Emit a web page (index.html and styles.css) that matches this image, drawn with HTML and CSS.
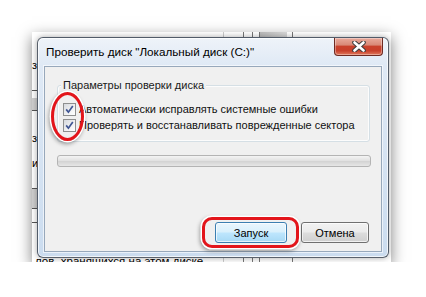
FILE: index.html
```html
<!DOCTYPE html>
<html lang="ru">
<head>
    <meta charset="UTF-8">
    <meta name="viewport" content="width=device-width, initial-scale=1.0">
    <title>Проверить диск</title>
    <link rel="stylesheet" href="styles.css">
</head>
<body>
    <div class="shot">
        <!-- bits of the window that sits behind the dialog -->
        <div class="behind">
            <span class="bg-letter l1">з</span>
            <span class="bg-letter l2">з</span>
            <span class="bg-letter l3">и</span>
            <span class="bg-block b1"></span>
            <span class="bg-block b2"></span>
            <span class="bg-rule r1"></span>
            <span class="bg-rule r2"></span>
            <span class="bg-rule r3"></span>
            <span class="bg-rule r4"></span>
            <span class="bg-rule r5"></span>
            <span class="bg-col c1"></span>
            <span class="bg-col c2"></span>
            <span class="bg-col c3"></span>
            <span class="bg-col c4"></span>
            <span class="bg-col c5"></span>
            <span class="bg-head"></span>
            <span class="bg-text">лов, хранящихся на этом диске.</span>
        </div>

        <div class="window">
            <div class="titlebar">
                <span class="title">Проверить диск "Локальный диск (С:)"</span>
                <span class="close">
                    <svg width="14" height="11" viewBox="0 0 14 11">
                        <path d="M2.5 1.5 L11.5 9.5 M11.5 1.5 L2.5 9.5" stroke="#3d3d3d" stroke-width="4.6" stroke-linecap="round"/>
                        <path d="M2.5 1.5 L11.5 9.5 M11.5 1.5 L2.5 9.5" stroke="#fff" stroke-width="2.6" stroke-linecap="round"/>
                    </svg>
                </span>
            </div>

            <div class="client">
                <div class="group">
                    <span class="group-title">Параметры проверки диска</span>
                    <div class="options">
                        <span class="mark-ellipse"></span>
                        <div class="option">
                            <span class="check">
                                <svg width="11" height="11" viewBox="0 0 11 11">
                                    <path d="M2.2 5.4 L4.4 8.2 L8.8 2" fill="none" stroke="#3f5593" stroke-width="1.7"/>
                                </svg>
                            </span>
                            Автоматически исправлять системные ошибки
                        </div>
                        <div class="option">
                            <span class="check">
                                <svg width="11" height="11" viewBox="0 0 11 11">
                                    <path d="M2.2 5.4 L4.4 8.2 L8.8 2" fill="none" stroke="#3f5593" stroke-width="1.7"/>
                                </svg>
                            </span>
                            Проверять и восстанавливать поврежденные сектора
                        </div>
                    </div>
                </div>

                <div class="progress"></div>

                <div class="actions">
                    <span class="btn btn-default">Запуск</span>
                    <span class="btn btn-cancel">Отмена</span>
                </div>
            </div>
        </div>
    </div>
</body>
</html>
```

FILE: styles.css
```css
body {
    margin: 0;
    background-color: #fff;
    font-family: 'Liberation Sans', Arial, sans-serif;
    font-size: 11px;
    color: #111;
}

.shot {
    display: grid;
    width: 359px;
    height: 230px;
    margin: 32px 0 0 32px;
    overflow: hidden;
    background-color: #fff;
    box-shadow: 0 5px 14px rgba(0, 0, 0, 0.5);
}

.behind,
.window {
    grid-area: 1 / 1;
}

/* the background window is a free canvas of fragments */
.behind {
    position: relative;
}

.bg-letter {
    position: absolute;
    left: 0;
    font-size: 11px;
    line-height: 14px;
    color: #000;
}

.l1 { top: 26px; }
.l2 { top: 99px; }
.l3 { top: 124px; }

.bg-block {
    position: absolute;
    left: 0;
    width: 6px;
    background-color: #cfcfcf;
}

.b1 { top: 66px; height: 12px; }
.b2 { top: 156px; height: 20px; }

.bg-rule {
    position: absolute;
    left: 0;
    width: 6px;
    height: 1px;
    background-color: #555;
}

.r1 { top: 58px; }
.r2 { top: 78px; }
.r3 { top: 156px; }
.r4 { top: 176px; }
.r5 { top: 190px; }

.bg-col {
    position: absolute;
    top: 0;
    bottom: 0;
    width: 1px;
    background-color: #777;
}

.c1 { left: 191px; background-color: #ccc; }
.c2 { left: 211px; }
.c3 { left: 220px; }
.c4 { left: 227px; }
.c5 { left: 260px; }

.bg-head {
    position: absolute;
    top: 0;
    left: 228px;
    width: 27px;
    height: 5px;
    background: linear-gradient(to right, #bbb, #d8d8d8);
}

.bg-text {
    position: absolute;
    left: 3px;
    top: 221px;
    font-size: 11.5px;
    line-height: 16px;
    color: #000;
    white-space: nowrap;
}

/* dialog */
.window {
    position: relative;
    z-index: 1;
    display: flex;
    flex-direction: column;
    align-self: start;
    width: 352px;
    height: 221px;
    margin: 5px 0 0 5px;
    box-sizing: border-box;
    border: 1px solid rgba(40, 48, 60, 0.75);
    border-radius: 6px;
    background: linear-gradient(to bottom, #eef3f9 0, #dfe9f5 28px, #cbdcef 100%);
    box-shadow: inset 0 0 0 1px rgba(255, 255, 255, 0.7), 0 0 6px rgba(0, 0, 0, 0.35);
}

.titlebar {
    display: flex;
    align-items: center;
    height: 28px;
    padding-left: 8px;
}

.title {
    flex: 1;
    font-size: 11.7px;
    line-height: 16px;
    color: #000;
    white-space: nowrap;
}

.close {
    display: flex;
    align-items: center;
    justify-content: center;
    align-self: flex-start;
    width: 49px;
    height: 18px;
    margin-right: 5px;
    box-sizing: border-box;
    border: 1px solid #6e2a22;
    border-top: none;
    border-radius: 0 0 4px 4px;
    background: linear-gradient(to bottom, #e9aa9c 0, #d98a78 40%, #c9412c 50%, #c8402b 75%, #e07a5e 100%);
    box-shadow: inset 0 0 0 1px rgba(255, 255, 255, 0.35);
}

.client {
    display: flex;
    flex-direction: column;
    height: 186px;
    margin: 0 6px;
    box-sizing: border-box;
    border: 1px solid #97a8bb;
    background-color: #f0f0f0;
    box-shadow: 0 0 0 1px rgba(255, 255, 255, 0.6);
}

.group {
    display: flex;
    flex-direction: column;
    margin: 18px 11px 0 12px;
    padding: 0 0 8px 5px;
    border: 1px solid #d5dfe5;
    border-radius: 3px;
    box-shadow: inset 0 0 0 1px rgba(255, 255, 255, 0.8);
}

.group-title {
    align-self: flex-start;
    margin: -9px 0 0 -2px;
    padding: 0 2px;
    line-height: 16px;
    background-color: #f0f0f0;
    color: #1a1a1a;
}

.options {
    position: relative;
    margin-top: 8px;
}

.option {
    display: flex;
    align-items: center;
    height: 16px;
    white-space: nowrap;
}

.check {
    display: flex;
    align-items: center;
    justify-content: center;
    width: 13px;
    height: 13px;
    margin-right: 3px;
    box-sizing: border-box;
    border: 1px solid #8e8f8f;
    background: linear-gradient(135deg, #d6d9de 0, #f2f3f4 60%, #fff 100%);
}

.mark-ellipse {
    position: absolute;
    left: -12px;
    top: -9px;
    width: 33px;
    height: 49px;
    box-sizing: border-box;
    border: 3.5px solid #e3151b;
    border-radius: 50%;
    box-shadow: 0 0 0 1.5px #fff, -1px 2px 4px 1px rgba(0, 0, 0, 0.4);
}

.progress {
    height: 12px;
    margin: 13px 10px 0 12px;
    box-sizing: border-box;
    border: 1px solid #b4b4b4;
    border-radius: 3px;
    background: linear-gradient(to bottom, #f4f4f4 0, #e2e2e2 45%, #d4d4d4 55%, #e6e6e6 100%);
}

.actions {
    display: flex;
    justify-content: flex-end;
    gap: 14px;
    margin-top: auto;
    padding: 0 12px 8px 0;
}

.btn {
    display: flex;
    align-items: center;
    justify-content: center;
    height: 21px;
    box-sizing: border-box;
    border: 1px solid #707070;
    border-radius: 3px;
    background: linear-gradient(to bottom, #f2f2f2 0, #ebebeb 48%, #dddddd 52%, #cfcfcf 100%);
    box-shadow: inset 0 0 0 1px rgba(255, 255, 255, 0.7);
    color: #000;
}

.btn-default {
    position: relative;
    width: 72px;
    border-color: #3c7fb1;
    background: linear-gradient(to bottom, #eaf6fd 0, #d9f0fc 48%, #bee6fd 52%, #a7d9f5 100%);
}

.btn-default::after {
    content: '';
    position: absolute;
    top: -6px;
    left: -14px;
    right: -13px;
    bottom: -6px;
    border: 3.5px solid #e3151b;
    border-radius: 10px;
    box-shadow: 0 0 0 1.5px #fff, -1px 2px 4px 1px rgba(0, 0, 0, 0.4);
}

.btn-cancel {
    width: 68px;
}
```
